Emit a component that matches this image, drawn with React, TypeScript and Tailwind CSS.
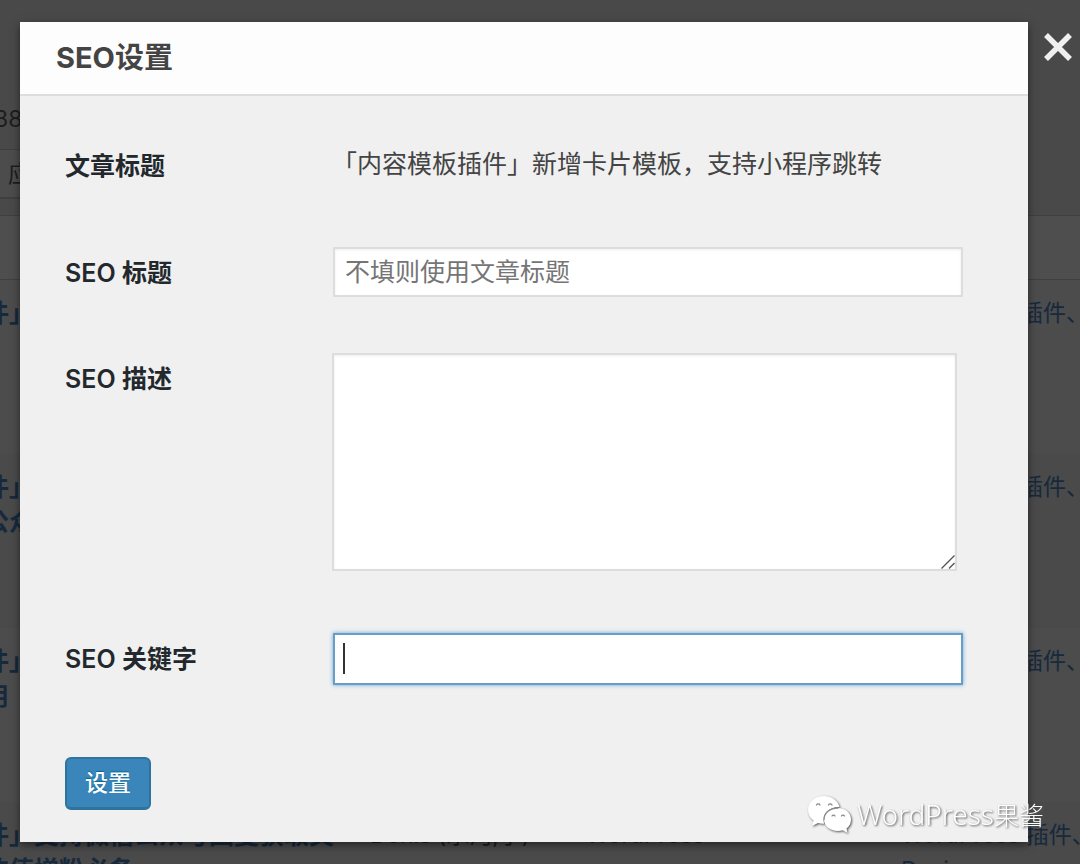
import { useState } from "react";
import type { ReactNode } from "react";

type PostRow = { title: string[]; author?: string; category?: string; tags: string[] };

const posts: PostRow[] = [
  { title: ["件」"], tags: ["插件、"] },
  { title: ["件」", "公众"], tags: ["插件、"] },
  { title: ["件」", "用"], tags: ["插件、"] },
  {
    title: ["件」支持微信公众号回复获取文", "的值增粉必备"],
    author: "Denis (水河,小)",
    category: "WordPress",
    tags: ["WordPress 插件、", "Design"],
  },
];

function PostsPage() {
  return (
    <div aria-hidden="true" className="absolute inset-0 overflow-hidden bg-[#494949] text-[23px] text-[#1d1d1d]">
      <div className="flex h-[215px] flex-col">
        <p className="-ml-1.5 mt-[101px] leading-9">38</p>
        <div className="mt-3 h-[50px] w-24 border-y border-b-2 border-[#3f3f3f] bg-[#4c4c4c] pl-2 leading-[48px]">应</div>
      </div>
      <div className="h-[65px] border-y border-[#3f3f3f] bg-[#4e4e4e]" />
      {posts.map((post, i) => (
        <div
          key={i}
          className="-ml-4 grid h-[174px] grid-cols-[386px_216px_315px_1fr] bg-[#4a4a4a] pt-4 leading-[35px] odd:bg-[#4c4c4c]"
        >
          <div className="text-[25px] font-bold text-[#16293d]">
            {post.title.map((line) => (
              <div key={line} className="whitespace-nowrap">{line}</div>
            ))}
          </div>
          <div className="whitespace-nowrap">{post.author}</div>
          <div>{post.category}</div>
          <div className="text-[#16293d]">
            {post.tags.map((tag) => (
              <div key={tag} className={post.author ? "whitespace-nowrap" : "whitespace-nowrap pl-[119px]"}>{tag}</div>
            ))}
          </div>
        </div>
      ))}
    </div>
  );
}

function Field({ id, label, children }: { id: string; label: string; children: ReactNode }) {
  return (
    <div className="grid grid-cols-[267px_1fr] items-start">
      <label htmlFor={id} className="text-[25px] leading-[52px] font-semibold text-[#23282d]">
        {label}
      </label>
      {children}
    </div>
  );
}

function Watermark() {
  return (
    <div className="absolute right-9 bottom-[31px] flex items-center gap-1.5 text-white drop-shadow-[1px_1px_1px_#555]">
      <svg viewBox="0 0 44 38" className="h-[38px] w-11" fill="currentColor" aria-hidden="true">
        <path d="M17 1C8 1 1 7 1 15c0 4.500 2 8 5.500 10.500L5 31l6-3c2 .6 4 .9 6 .8C15 20 21 12 32.500 12 31 5.500 24.500 1 17 1Z" />
        <path d="M31 13c-8 0-14 5-14 11.500S23 36 31 36c1.700 0 3.300-.2 4.800-.7L40.500 38l-1-4.500c2.800-2 4.500-5.200 4.500-9C44 18 38.500 13 31 13Z" />
        <g fill="none" stroke="#8a8a8a" strokeWidth="1.300" strokeLinecap="round">
          <path d="M17 24.500C17 18 23 13 31 13" />
          <path d="M9.500 10a2 2 0 0 1 3.500 0M21.500 10a2 2 0 0 1 3.500 0M25 21a1.700 1.700 0 0 1 3 0M34.500 21a1.700 1.700 0 0 1 3 0" />
        </g>
      </svg>
      <span className="font-['Noto_Sans','Noto_Sans_CJK_SC',sans-serif] text-[28px] leading-9 font-light">
        WordPress<span className="text-[25px]">果酱</span>
      </span>
    </div>
  );
}

export default function App() {
  const [title, setTitle] = useState("");
  const [description, setDescription] = useState("");
  const [keywords, setKeywords] = useState("");

  return (
    <div className="relative min-h-screen overflow-hidden font-['Inter','Noto_Sans_CJK_SC',sans-serif]">
      <PostsPage />
      <div className="relative flex items-start py-[22px] pl-5">
        <section
          role="dialog"
          aria-labelledby="dialog-title"
          className="min-w-0 flex-1 bg-[#f0f0f0] shadow-[0_3px_8px_rgba(0,0,0,0.5)]"
        >
          <header className="border-b-2 border-[#dddddd] bg-[#fdfdfd] px-9">
            <h1 id="dialog-title" className="text-[29px] leading-[72px] font-bold text-[#444444]">SEO设置</h1>
          </header>
          <form className="pt-12 pr-[65px] pb-8 pl-[45px]" onSubmit={(e) => e.preventDefault()}>
            <div className="grid grid-cols-[267px_1fr] text-[25px]">
              <span className="leading-[44px] font-semibold text-[#23282d]">文章标题</span>
              <span className="leading-10 text-[#444444]">「内容模板插件」新增卡片模板，支持小程序跳转</span>
            </div>
            <div className="mt-[59px]">
              <Field id="seo-title" label="SEO 标题">
                <input
                  id="seo-title"
                  type="text"
                  placeholder="不填则使用文章标题"
                  value={title}
                  onChange={(e) => setTitle(e.target.value)}
                  className="ml-px h-[50px] border-2 border-[#dddddd] bg-white px-2.5 text-[25px] text-[#32373c] shadow-[inset_0_1px_3px_rgba(0,0,0,0.07)] outline-none placeholder:text-[#757575]"
                />
              </Field>
            </div>
            <div className="mt-[54px]">
              <Field id="seo-description" label="SEO 描述">
                <div className="relative mr-1.5 h-[218px]">
                  <textarea
                    id="seo-description"
                    value={description}
                    onChange={(e) => setDescription(e.target.value)}
                    className="block h-full w-full resize-none border-2 border-[#dddddd] bg-white px-2.5 py-1 text-[25px] text-[#32373c] shadow-[inset_0_1px_3px_rgba(0,0,0,0.07)] outline-none"
                  />
                  <svg viewBox="0 0 14 14" className="absolute right-0.5 bottom-0.5 size-3.5" fill="none" stroke="#555" strokeWidth="1.400" aria-hidden="true">
                    <path d="M0.500 13.500 13.500 0.500M8 13.500l5.500-5.500" />
                  </svg>
                </div>
              </Field>
            </div>
            <div className="mt-[62px]">
              <Field id="seo-keywords" label="SEO 关键字">
                <div className="relative ml-px">
                  <input
                    id="seo-keywords"
                    type="text"
                    value={keywords}
                    onChange={(e) => setKeywords(e.target.value)}
                    className="block h-[52px] w-full border-2 border-[#6a9dc4] bg-white px-2.5 text-[25px] text-[#32373c] shadow-[0_0_4px_rgba(30,140,220,0.7)] outline-none"
                  />
                  {keywords === "" && <span className="pointer-events-none absolute top-2.5 left-2.5 h-[31px] w-0.5 bg-[#333]" />}
                </div>
              </Field>
            </div>
            <button
              type="submit"
              className="mt-[72px] block h-[53px] w-[86px] rounded-md border-2 border-b-3 border-[#2f749f] bg-[#3a86ba] text-[23px] font-medium text-white [text-shadow:0_-1px_1px_#006799]"
            >
              设置
            </button>
          </form>
        </section>
        <button type="button" aria-label="关闭" className="mt-[5px] flex h-10 w-[52px] shrink-0 items-center justify-center pl-2 text-[#f0f0f0]">
          <svg viewBox="0 0 28 28" className="size-7" stroke="currentColor" strokeWidth="5.500" aria-hidden="true">
            <path d="M2 2 26 26M26 2 2 26" />
          </svg>
        </button>
      </div>
      <Watermark />
    </div>
  );
}
